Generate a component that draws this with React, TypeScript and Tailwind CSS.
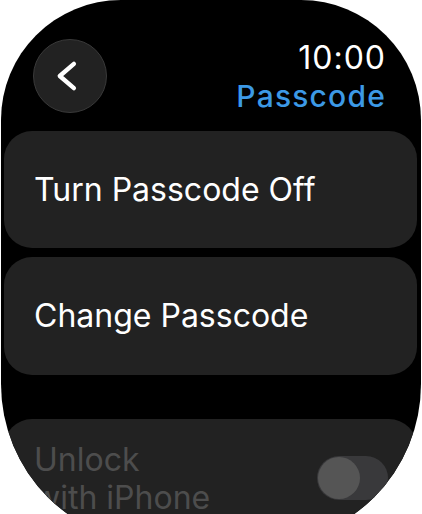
import React from "react";

const font = { fontFamily: "Inter, 'Noto Sans', sans-serif" };

const App = () => {
  return (
    <div className="w-[422px] h-[514px] overflow-hidden bg-white" style={font}>
      <div className="mx-px h-[544px] bg-black rounded-tl-[120px] rounded-tr-[120px] rounded-bl-[160px] rounded-br-[160px] overflow-hidden">
        {/* Header */}
        <div className="flex justify-between items-start h-[131px]">
          <div className="pt-[39px] pl-[32px]">
            <button className="w-[74px] h-[74px] rounded-full bg-[#222222] border-[1.5px] border-[#3a3a3a] flex items-center justify-center">
              <svg width="74" height="74" viewBox="0 0 74 74">
                <path
                  d="M41 24.5 L26.5 37 L41 49.5"
                  fill="none"
                  stroke="white"
                  strokeWidth="4.5"
                  strokeLinecap="round"
                  strokeLinejoin="round"
                />
              </svg>
            </button>
          </div>
          <div className="pt-[38px] pr-[35px] text-right">
            <div className="text-[32px] leading-[40px] tracking-[1px] text-white">10:00</div>
            <div className="text-[30px] leading-[36px] tracking-[1.2px] font-medium text-[#3c99e6]">
              Passcode
            </div>
          </div>
        </div>

        {/* Rows */}
        <div className="ml-[3px] mr-[4px] flex flex-col gap-[9px]">
          <div className="h-[117px] rounded-[28px] bg-[#222222] flex items-center px-[30px]">
            <span className="text-[32px] text-white">Turn Passcode Off</span>
          </div>
          <div className="h-[118px] rounded-[28px] bg-[#222222] flex items-center px-[30px]">
            <span className="text-[32px] text-white">Change Passcode</span>
          </div>
        </div>

        <div className="mt-[44px] ml-[3px] mr-[4px] h-[160px] rounded-[28px] bg-[#222222] flex justify-between items-start pt-[22px] pl-[30px] pr-[29px]">
          <div className="text-[32px] leading-[38px] text-[#4d4d4d]">
            <div>Unlock</div>
            <div>with iPhone</div>
          </div>
          <div className="mt-[15px] w-[71px] h-[44px] rounded-full bg-[#39393b] p-px">
            <div className="w-[42px] h-[42px] rounded-full bg-[#555555]" />
          </div>
        </div>
      </div>
    </div>
  );
};

export default App;
